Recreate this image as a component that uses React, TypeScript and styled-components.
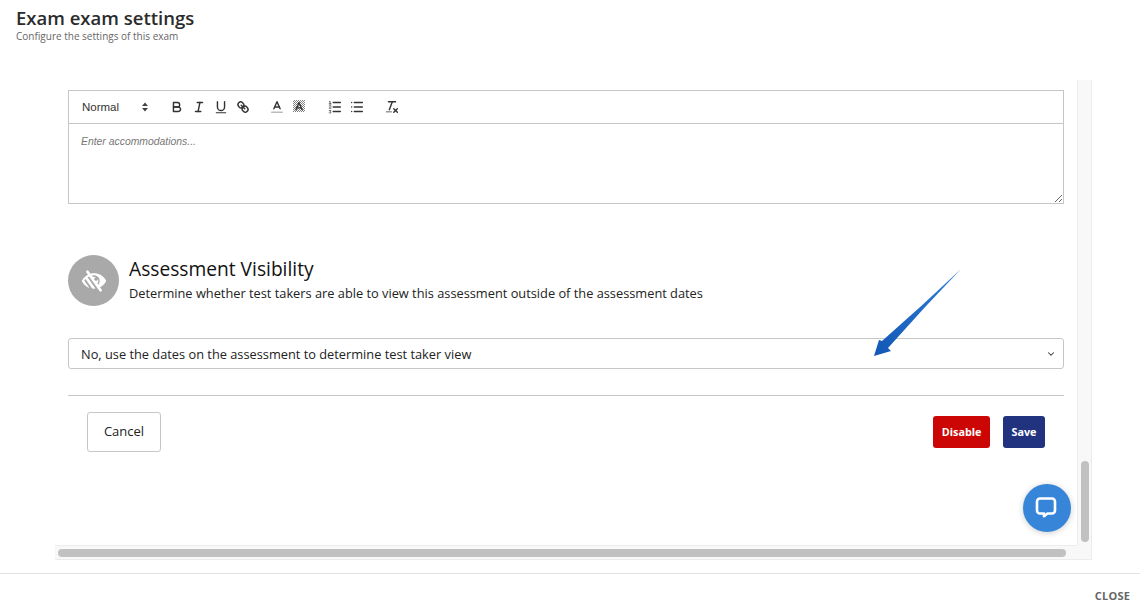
import { createGlobalStyle } from "styled-components";
import styled from "styled-components";
import { FaLowVision } from "react-icons/fa";
import { ChevronDown } from "lucide-react";

const GlobalStyle = createGlobalStyle`
  html, body {
    margin: 0;
    padding: 0;
    background: #fff;
    font-family: "Open Sans", "Liberation Sans", sans-serif;
  }
`;

function BoldIcon() {
  return (
    <Glyph viewBox="0 0 18 18">
      <path d="M5,4H9.5A2.5,2.5,0,0,1,12,6.5v0A2.5,2.5,0,0,1,9.5,9H5V4Z" />
      <path d="M5,9h5.5A2.5,2.5,0,0,1,13,11.5v0A2.5,2.5,0,0,1,10.5,14H5V9Z" />
    </Glyph>
  );
}

function ItalicIcon() {
  return (
    <Glyph viewBox="0 0 18 18">
      <line x1="7" x2="13" y1="4" y2="4" />
      <line x1="5" x2="11" y1="14" y2="14" />
      <line x1="8" x2="10" y1="14" y2="4" />
    </Glyph>
  );
}

function UnderlineIcon() {
  return (
    <Glyph viewBox="0 0 18 18">
      <path d="M5,3V9a4,4,0,0,0,4,4H9a4,4,0,0,0,4-4V3" />
      <rect x="3" y="15" width="12" height="1" rx="0.5" fill="#333" stroke="none" />
    </Glyph>
  );
}

function LinkIcon() {
  return (
    <Glyph viewBox="0 0 18 18">
      <line x1="7" x2="11" y1="7" y2="11" />
      <path d="M8.9,4.577a3.476,3.476,0,0,1,.36,4.679A3.476,3.476,0,0,1,4.577,8.9C3.185,7.5,2.035,6.4,4.217,4.217S7.5,3.185,8.9,4.577Z" />
      <path d="M13.423,9.1a3.476,3.476,0,0,0-4.679-.36,3.476,3.476,0,0,0,.36,4.679c1.392,1.392,2.5,2.542,4.679.36S14.815,10.5,13.423,9.1Z" />
    </Glyph>
  );
}

function ColorIcon() {
  return (
    <Glyph viewBox="0 0 18 18">
      <line x1="3" x2="15" y1="15" y2="15" stroke="#bbb" />
      <polyline points="5.5 11 9 3 12.5 11" />
      <line x1="11.63" x2="6.38" y1="9" y2="9" />
    </Glyph>
  );
}

function BackgroundIcon() {
  return (
    <Glyph viewBox="0 0 18 18">
      <defs>
        <pattern id="dots" width="2.25" height="2.25" patternUnits="userSpaceOnUse">
          <rect width="1.125" height="1.125" fill="#808080" stroke="none" />
          <rect x="1.125" y="1.125" width="1.125" height="1.125" fill="#808080" stroke="none" />
        </pattern>
      </defs>
      <rect x="2.25" y="1.125" width="13.5" height="13.5" fill="url(#dots)" stroke="none" />
      <polyline points="5.5 12 9 4 12.5 12" stroke="#333" />
      <line x1="11.63" x2="6.38" y1="10" y2="10" stroke="#333" />
    </Glyph>
  );
}

function OrderedIcon() {
  return (
    <Glyph viewBox="0 0 18 18">
      <line x1="7" x2="15" y1="4" y2="4" />
      <line x1="7" x2="15" y1="9" y2="9" />
      <line x1="7" x2="15" y1="14" y2="14" />
      <line x1="2.5" x2="4.5" y1="5.5" y2="5.5" strokeWidth="1" />
      <path d="M3.5,5.5V2.5L2.7,3" strokeWidth="0.8" />
      <path d="M2.5,8a1,1,0,0,1,2,0.4L2.5,10.5h2" strokeWidth="0.8" />
      <path d="M2.5,13h2l-1,1.2a0.9,0.9,0,1,1-1,1.2" strokeWidth="0.8" />
    </Glyph>
  );
}

function BulletIcon() {
  return (
    <Glyph viewBox="0 0 18 18">
      <line x1="6" x2="15" y1="4" y2="4" />
      <line x1="6" x2="15" y1="9" y2="9" />
      <line x1="6" x2="15" y1="14" y2="14" />
      <line x1="3" x2="3" y1="4" y2="4" />
      <line x1="3" x2="3" y1="9" y2="9" />
      <line x1="3" x2="3" y1="14" y2="14" />
    </Glyph>
  );
}

function CleanIcon() {
  return (
    <Glyph viewBox="0 0 18 18">
      <line x1="5" x2="13" y1="3" y2="3" />
      <line x1="6" x2="9.35" y1="12" y2="3" />
      <line x1="11" x2="15" y1="11" y2="15" />
      <line x1="15" x2="11" y1="11" y2="15" />
      <rect x="2" y="14" width="7" height="1" rx="0.5" fill="#333" stroke="none" />
    </Glyph>
  );
}

function SortIcon() {
  return (
    <svg width="8" height="10" viewBox="0 0 8 10">
      <path d="M4 0.5 7 4H1Z M4 9.5 1 6h6Z" fill="#444" />
    </svg>
  );
}

function ChatIcon() {
  return (
    <svg width="24" height="24" viewBox="0 0 24 24" fill="none">
      <path
        d="M5 2.5h12a3 3 0 0 1 3 3v9a3 3 0 0 1-3 3h-4.5l-3.5 2.7v-2.7H5a3 3 0 0 1-3-3v-9a3 3 0 0 1 3-3Z"
        stroke="#fff"
        strokeWidth="2.6"
        strokeLinejoin="round"
      />
    </svg>
  );
}

function AnnotationArrow() {
  return (
    <ArrowLayer viewBox="0 0 100 100" width="100" height="100">
      <defs>
        <linearGradient id="arrowFill" x1="1" y1="0" x2="0" y2="1">
          <stop offset="0" stopColor="#2f7fd8" />
          <stop offset="1" stopColor="#1257b5" />
        </linearGradient>
      </defs>
      <path
        d="M92 2 Q53.3 38.8 13 74 L10 73 L5 89 L22 84 L19 81 Q54.7 40.7 92 2 Z"
        fill="url(#arrowFill)"
      />
    </ArrowLayer>
  );
}

export default function App() {
  return (
    <Page>
      <GlobalStyle />
      <Header>
        <Title>Exam exam settings</Title>
        <Subtitle>Configure the settings of this exam</Subtitle>
      </Header>

      <ScrollFrame>
        <Pane>
          <Toolbar>
            <FormatPicker>
              Normal
              <SortIcon />
            </FormatPicker>
            <ToolGroup $after={17}>
              <BoldIcon />
              <ItalicIcon />
              <UnderlineIcon />
              <LinkIcon />
            </ToolGroup>
            <ToolGroup $after={19}>
              <ColorIcon />
              <BackgroundIcon />
            </ToolGroup>
            <ToolGroup $after={18}>
              <OrderedIcon />
              <BulletIcon />
            </ToolGroup>
            <ToolGroup $after={0}>
              <CleanIcon />
            </ToolGroup>
          </Toolbar>
          <Accommodations placeholder="Enter accommodations..." />

          <Section>
            <IconCircle>
              <FaLowVision size={24} color="#fff" />
            </IconCircle>
            <SectionBody>
              <SectionTitle>Assessment Visibility</SectionTitle>
              <SectionText>
                Determine whether test takers are able to view this assessment
                outside of the assessment dates
              </SectionText>
            </SectionBody>
          </Section>

          <SelectBox>
            <span>No, use the dates on the assessment to determine test taker view</span>
            <ChevronDown size={10} color="#333" strokeWidth={2.5} />
          </SelectBox>

          <Divider />

          <Actions>
            <CancelButton>Cancel</CancelButton>
            <RightActions>
              <SolidButton $bg="#cc0605">Disable</SolidButton>
              <SolidButton $bg="#21337f">Save</SolidButton>
            </RightActions>
          </Actions>

          <AnnotationArrow />
          <ChatBubble>
            <ChatIcon />
          </ChatBubble>
        </Pane>
        <VerticalTrack>
          <VerticalThumb />
        </VerticalTrack>
        <HorizontalTrack>
          <HorizontalThumb />
        </HorizontalTrack>
        <Corner />
      </ScrollFrame>

      <Footer>
        <CloseButton>CLOSE</CloseButton>
      </Footer>
    </Page>
  );
}

const Page = styled.div`
  display: flex;
  flex-direction: column;
  height: 610px;
  overflow: hidden;
`;

const Header = styled.header`
  height: 80px;
  box-sizing: border-box;
  padding: 6px 16px 0;
`;

const Title = styled.h1`
  margin: 0;
  font-size: 18.5px;
  line-height: 24px;
  font-weight: 600;
  color: #2b2b2b;
`;

const Subtitle = styled.div`
  font-size: 10px;
  line-height: 12px;
  color: #666;
`;

const ScrollFrame = styled.div`
  display: grid;
  grid-template-columns: 1022px 15px;
  grid-template-rows: 465px 15px;
  margin-left: 55px;
  width: 1037px;
`;

const Pane = styled.div`
  position: relative;
  box-sizing: border-box;
  padding: 10px 13px 0;
  overflow: hidden;
`;

const Toolbar = styled.div`
  display: flex;
  align-items: center;
  height: 34px;
  box-sizing: border-box;
  padding-left: 13px;
  border: 1px solid #c6c6c6;
`;

const FormatPicker = styled.div`
  display: flex;
  align-items: center;
  justify-content: space-between;
  width: 67px;
  margin-right: 19px;
  font-family: "Liberation Sans", sans-serif;
  font-size: 11.5px;
  font-weight: 500;
  color: #333;
`;

const ToolGroup = styled.div<{ $after: number }>`
  display: flex;
  gap: 6px;
  margin-left: 1px;
  margin-right: ${(p) => p.$after}px;
`;

const Glyph = styled.svg`
  width: 16px;
  height: 16px;
  fill: none;
  stroke: #333;
  stroke-width: 1.6;
  stroke-linecap: round;
  stroke-linejoin: round;
`;

const Accommodations = styled.textarea`
  display: block;
  width: 100%;
  height: 80px;
  box-sizing: border-box;
  padding: 12px 12px;
  border: 1px solid #c6c6c6;
  border-top: 0;
  border-radius: 0;
  outline: none;
  resize: vertical;
  font-family: "Liberation Sans", sans-serif;
  font-size: 10.4px;

  &::placeholder {
    color: #777;
    font-style: italic;
    opacity: 1;
  }
`;

const Section = styled.section`
  display: flex;
  align-items: center;
  gap: 10px;
  margin-top: 51px;
`;

const IconCircle = styled.div`
  display: flex;
  align-items: center;
  justify-content: center;
  width: 51px;
  height: 51px;
  border-radius: 50%;
  background: #a9a9a9;
`;

const SectionBody = styled.div`
  margin-bottom: 2px;
`;

const SectionTitle = styled.h2`
  margin: 0 0 3px;
  font-size: 19.2px;
  line-height: 24px;
  font-weight: 400;
  color: #111;
`;

const SectionText = styled.p`
  margin: 0;
  font-size: 12.8px;
  line-height: 18px;
  color: #222;
`;

const SelectBox = styled.div`
  display: flex;
  align-items: center;
  justify-content: space-between;
  height: 31px;
  box-sizing: border-box;
  margin-top: 32px;
  padding: 1px 7px 0 12px;
  border: 1px solid #c6c6c6;
  border-radius: 3px;
  font-size: 12.8px;
  color: #222;
`;

const Divider = styled.hr`
  margin: 26px 0 0;
  border: 0;
  border-top: 1px solid #c6c6c6;
`;

const Actions = styled.div`
  display: flex;
  align-items: center;
  justify-content: space-between;
  padding: 16px 19px 0;
`;

const RightActions = styled.div`
  display: flex;
  gap: 13px;
`;

const CancelButton = styled.button`
  width: 74px;
  height: 40px;
  padding: 0 0 2px;
  background: #fff;
  border: 1px solid #c6c6c6;
  border-radius: 3px;
  font-family: inherit;
  font-size: 13px;
  color: #222;
`;

const SolidButton = styled.button<{ $bg: string }>`
  height: 32px;
  padding: 0 8.5px 1px;
  border: 0;
  border-radius: 3px;
  background: ${(p) => p.$bg};
  color: #fff;
  font-family: inherit;
  font-size: 10.8px;
  font-weight: 700;
`;

const ArrowLayer = styled.svg`
  position: absolute;
  left: 814px;
  top: 187px;
`;

const ChatBubble = styled.div`
  position: absolute;
  left: 968px;
  top: 404px;
  display: flex;
  align-items: center;
  justify-content: center;
  width: 48px;
  height: 48px;
  border-radius: 50%;
  background: #3785d8;
  box-shadow: 0 1px 6px rgba(0, 0, 0, 0.2);
`;

const VerticalTrack = styled.div`
  display: flex;
  align-items: flex-end;
  justify-content: center;
  box-sizing: border-box;
  padding-bottom: 3px;
  background: #f8f8f8;
  border-left: 1px solid #ececec;
  border-right: 1px solid #ececec;
`;

const VerticalThumb = styled.div`
  width: 8px;
  height: 81px;
  border-radius: 4px;
  background: #c1c1c1;
`;

const HorizontalTrack = styled.div`
  display: flex;
  align-items: center;
  box-sizing: border-box;
  padding-left: 3px;
  background: #f8f8f8;
  border-top: 1px solid #ececec;
  border-bottom: 1px solid #ececec;
`;

const HorizontalThumb = styled.div`
  width: 1008px;
  height: 8px;
  border-radius: 4px;
  background: #c1c1c1;
`;

const Corner = styled.div`
  background: #f8f8f8;
  border-right: 1px solid #ececec;
  border-bottom: 1px solid #ececec;
`;

const Footer = styled.footer`
  display: flex;
  align-items: center;
  justify-content: flex-end;
  height: 37px;
  margin-top: 13px;
  padding: 7px 10px 0 0;
  box-sizing: border-box;
  border-top: 1px solid #e2e2e2;
`;

const CloseButton = styled.button`
  padding: 0;
  border: 0;
  background: none;
  font-family: inherit;
  font-size: 11px;
  font-weight: 700;
  letter-spacing: 0.2px;
  color: #666;
`;
